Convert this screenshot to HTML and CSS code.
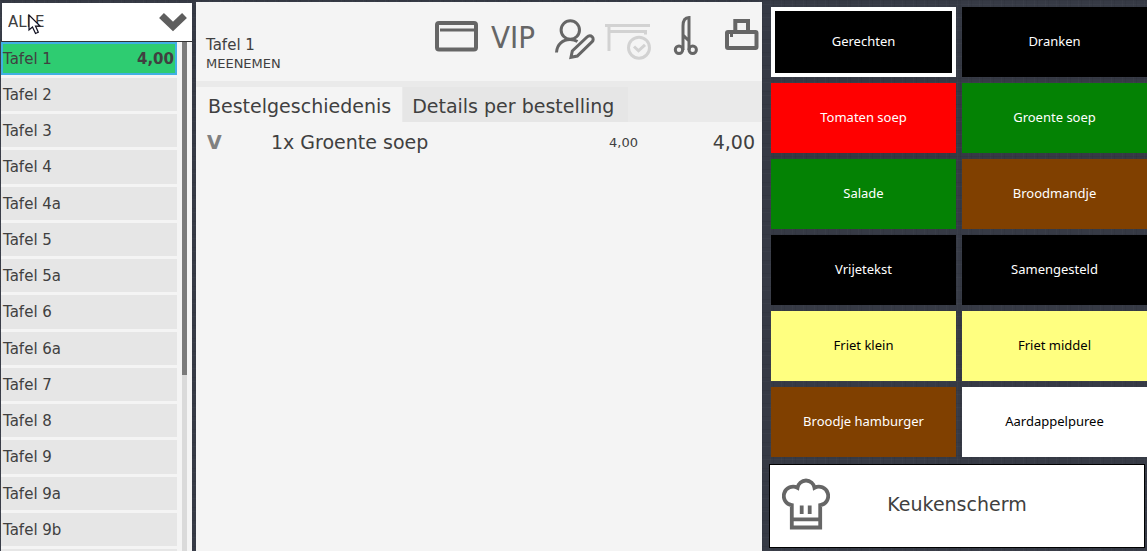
FILE: index.html
```html
<!DOCTYPE html>
<html lang="nl">
<head>
<meta charset="utf-8">
<title>Kassa</title>
<link rel="stylesheet" href="styles.css">
</head>
<body>
<div class="app">
  <aside class="sidebar">
    <div class="filter">
      <select class="filter-select" aria-label="Filter tafels"><option>ALLE</option></select>
      <svg class="chevron" viewBox="0 0 28 20" aria-hidden="true"><path d="M2.500 3.500 14 14.500 25.500 3.500" fill="none" stroke="#5e5e5e" stroke-width="7"/></svg>
      <svg class="pointer" viewBox="0 0 14 21" aria-hidden="true"><path d="M1 1V16L4.500 13 7.500 19.500 10.300 18.300 7.500 12H12Z" fill="#fff" stroke="#101020" stroke-width="1.200"/></svg>
    </div>
    <div class="list-area">
      <div class="tables">
        <button class="table-row selected"><span>Tafel 1</span><b>4,00</b></button>
        <button class="table-row">Tafel 2</button>
        <button class="table-row">Tafel 3</button>
        <button class="table-row">Tafel 4</button>
        <button class="table-row">Tafel 4a</button>
        <button class="table-row">Tafel 5</button>
        <button class="table-row">Tafel 5a</button>
        <button class="table-row">Tafel 6</button>
        <button class="table-row">Tafel 6a</button>
        <button class="table-row">Tafel 7</button>
        <button class="table-row">Tafel 8</button>
        <button class="table-row">Tafel 9</button>
        <button class="table-row">Tafel 9a</button>
        <button class="table-row">Tafel 9b</button>
        <button class="table-row" aria-label="Volgende tafel"></button>
      </div>
      <div class="track"><div class="thumb"></div></div>
    </div>
  </aside>

  <main class="order">
    <header class="order-head">
      <div class="order-title">
        <div class="order-name">Tafel 1</div>
        <div class="order-kind">MEENEMEN</div>
      </div>
      <div class="tools">
        <button class="tool" aria-label="Betaalkaart"><svg width="50" height="50" viewBox="0 0 50 50"><rect x="5" y="11" width="39" height="26.500" rx="2" stroke-width="4"/><path d="M8 18H44" stroke-width="3"/></svg></button>
        <button class="tool vip">VIP</button>
        <button class="tool" aria-label="Klant bewerken"><svg width="56" height="50" viewBox="0 0 56 50"><circle cx="26.300" cy="18" r="9.200"/><path d="M12.500 40.500C13 32 19 27.500 26 27.500 29 27.500 31 28 33.500 29.500M27 45.300 28.300 39 43.300 24.800A3.400 3.400 0 0 1 48.200 29.600L33.300 44Z"/></svg></button>
        <button class="tool" aria-label="Tafel gereed"><svg class="faded" width="56" height="50" viewBox="0 0 56 50"><path d="M5 13.500H50M9 14V39M9 19.500H45.500V22.500"/><circle cx="39" cy="35.700" r="10.500"/><path d="M34 34.500 38.500 38.800 45 32.800"/></svg></button>
        <button class="tool" aria-label="Splitsen"><svg width="60" height="50" viewBox="0 0 60 50"><circle cx="23" cy="37.700" r="3.700"/><circle cx="36.700" cy="37.700" r="3.700"/><path d="M27 38V14C27 8 29 5.500 33 5.500V38M27.500 23.500 33 29"/></svg></button>
        <button class="tool" aria-label="Afdrukken"><svg width="46" height="50" viewBox="0 0 46 50"><rect x="11" y="20" width="29.500" height="16" rx="1" stroke-width="4"/><path d="M19.300 19V9H32V19" stroke-width="4"/><rect x="14" y="22" width="3" height="3" fill="#666" stroke="none"/></svg></button>
      </div>
    </header>
    <nav class="tabs">
      <button class="tab active">Bestelgeschiedenis</button>
      <button class="tab">Details per bestelling</button>
    </nav>
    <table class="lines">
      <tr><td class="mark">V</td><td class="item">1x Groente soep</td><td class="unit">4,00</td><td class="sum">4,00</td></tr>
    </table>
  </main>

  <section class="menu">
    <div class="tiles">
      <button class="tile current">Gerechten</button>
      <button class="tile">Dranken</button>
      <button class="tile red">Tomaten soep</button>
      <button class="tile green">Groente soep</button>
      <button class="tile green">Salade</button>
      <button class="tile brown">Broodmandje</button>
      <button class="tile">Vrijetekst</button>
      <button class="tile">Samengesteld</button>
      <button class="tile yellow">Friet klein</button>
      <button class="tile yellow">Friet middel</button>
      <button class="tile brown">Broodje hamburger</button>
      <button class="tile white">Aardappelpuree</button>
    </div>
    <button class="kitchen">
      <svg width="48" height="52" viewBox="0 0 48 52" aria-hidden="true"><path d="M9.800 49.500V27.200A9.300 9.300 0 1 1 15.500 9.800 8.600 8.600 0 0 1 32.500 9.800 9.300 9.300 0 1 1 38.200 27.200V49.500ZM10 41.300H38M19.700 27.500V36M27.700 27.500V36" fill="none" stroke="#666" stroke-width="3.800"/></svg>
      <span>Keukenscherm</span>
    </button>
  </section>
</div>
</body>
</html>
```
FILE: styles.css
```css
* { box-sizing: border-box; }
body {
  margin: 0;
  color: #404040;
  font-family: "DejaVu Sans", Verdana, sans-serif;
  background-color: #363a45;
  background-image:
    repeating-linear-gradient(90deg, rgba(255,255,255,.02) 0 1px, transparent 1px 3px, rgba(0,0,0,.05) 3px 4px, transparent 4px 11px),
    repeating-linear-gradient(0deg, rgba(255,255,255,.02) 0 1px, transparent 1px 4px, rgba(0,0,0,.05) 4px 5px, transparent 5px 13px);
}
button, select { margin: 0; padding: 0; border: 0; background: none; color: inherit; font: inherit; }

.app {
  display: grid;
  grid-template-columns: 191px minmax(0, 570fr) minmax(0, 385fr);
  height: 100vh;
  padding-left: 1px;
  overflow: hidden;
}

.sidebar { display: flex; flex-direction: column; min-height: 0; padding-top: 3px; }
.filter { position: relative; height: 39px; margin-left: 1px; border-bottom: 1px solid #333; background: #fff; }
.filter-select { width: 100%; height: 38px; padding-left: 6px; appearance: none; font-size: 15px; }
.chevron { position: absolute; right: 5px; top: 9px; width: 28px; height: 20px; pointer-events: none; }
.pointer { position: absolute; left: 26px; top: 11px; width: 14px; height: 21px; pointer-events: none; }
.list-area { display: flex; flex: 1; gap: 5px; min-height: 0; padding-right: 5px; background: #f4f4f4; }
.tables { display: flex; flex: 1; flex-direction: column; gap: 3px; overflow: hidden; }
.table-row {
  display: flex;
  flex: none;
  align-items: center;
  justify-content: space-between;
  height: 33px;
  padding: 0 3px 0 2px;
  background: #e6e6e6;
  font-size: 15px;
}
.table-row:nth-child(4n) { height: 34px; }
.table-row.selected { background: #2ecc71; box-shadow: inset 0 0 0 2px #41b0e4; }
.track { width: 5px; background: #dadada; }
.thumb { height: 333px; background: #7b7b7b; }

.order { margin: 2px 0 0 4px; background: #f4f4f4; }
.order-head { display: flex; justify-content: space-between; height: 79px; padding: 10px 0 0 10px; }
.order-title { padding-top: 24px; }
.order-name { font-size: 15px; line-height: 19px; }
.order-kind { font-size: 13px; line-height: 18px; }
.tools { display: flex; height: 50px; color: #666; }
.tool svg { display: block; fill: none; stroke: #666; stroke-width: 3; }
.tool .faded { stroke: #d2d2d2; }
.vip { width: 62px; font: 31px "DejaVu Sans Condensed", "DejaVu Sans", sans-serif; }
.tabs { display: flex; gap: 1px; height: 41px; padding-top: 6px; background: #eaeaea; }
.tab { padding: 2px 12px 0; background: #e6e6e6; font-size: 19px; }
.tab + .tab { padding: 2px 14px 0 9px; }
.tab.active { padding-right: 11px; background: #f4f4f4; }
.lines { width: 100%; border-collapse: collapse; table-layout: fixed; }
.lines td { height: 40px; padding: 0; font-size: 19px; }
.lines .mark { width: 75px; padding-left: 11px; color: #808080; font-weight: bold; }
.lines .unit { width: 92px; font-size: 13px; text-align: right; }
.lines .sum { width: 124px; padding-right: 7px; text-align: right; }

.menu { padding: 7px 0 0 7px; }
.tiles { display: grid; grid-template-columns: 1fr 1fr; gap: 6px; padding-left: 2px; }
.tile { height: 70px; padding-bottom: 2px; background: #000; color: #fff; font-family: "Noto Sans", sans-serif; font-size: 13px; }
.tile.current { border: 4px solid #fff; }
.red { background: #f00; }
.green { background: #048204; }
.brown { background: #804000; }
.yellow { background: #ffff80; color: #000; }
.white { background: #fff; color: #000; }
.kitchen {
  display: grid;
  grid-template-columns: 48px 1fr;
  align-items: center;
  width: calc(100% - 2px);
  height: 84px;
  margin-top: 7px;
  padding: 0 60px 4px 12px;
  border: 1px solid #000;
  background: #fff;
  font-size: 19px;
}
```
